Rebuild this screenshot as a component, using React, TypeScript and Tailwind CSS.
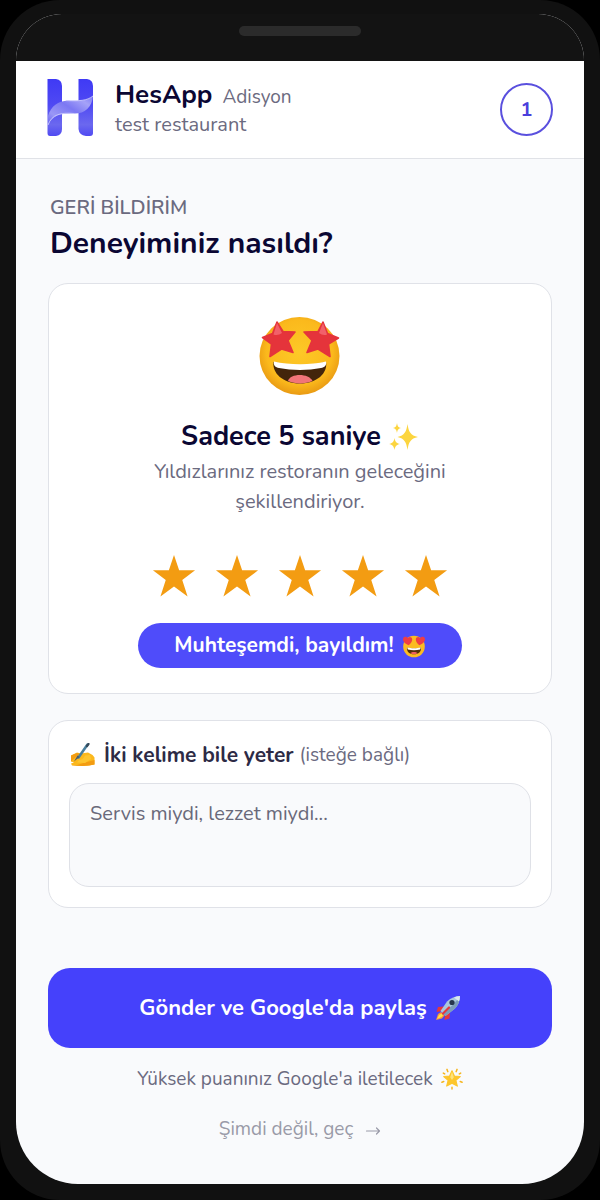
import { useState } from "react";

const STAR = "M12 0.6 14.8 8.900H23.500L16.500 14.200 19.400 23.200 12 17.700 4.600 23.200 7.500 14.200 .5 8.900H9.200Z";

function Logo() {
  return (
    <svg viewBox="0 0 47 57" className="mb-1 h-[57px] w-[47px] shrink-0" role="img" aria-label="HesApp">
      <defs>
        <linearGradient id="pillar" x1="0" y1="0" x2="0" y2="1">
          <stop offset="0" stopColor="#3f3af5" />
          <stop offset="0.45" stopColor="#4f49f3" />
          <stop offset="0.8" stopColor="#6b68ef" />
          <stop offset="1" stopColor="#504af2" />
        </linearGradient>
        <linearGradient id="ribbon" x1="0" y1="1" x2="1" y2="0">
          <stop offset="0" stopColor="#5f5af0" />
          <stop offset="0.25" stopColor="#9a97f6" />
          <stop offset="0.55" stopColor="#7c78f3" />
          <stop offset="0.8" stopColor="#a5a2f8" />
          <stop offset="1" stopColor="#7b77f5" />
        </linearGradient>
      </defs>
      <path d="M0.500 0H9Q15 1 15 7V50Q15 56 9 57H3Q0.500 57 0.500 54Z" fill="url(#pillar)" />
      <path d="M31.500 0H40Q46 1 46 7V54Q46 57 43 57H39Q32 56 31.500 50Z" fill="url(#pillar)" />
      <path d="M1 47V37C4 27 11 22 21 21.500C32 22 41 22 46 17C45 29 37 35 27 34.500C14 34 5 36 1 47Z" fill="url(#ribbon)" />
      <path d="M1 46C5 35 14 33.500 27 34.500M19 21.600C32 22 40 22 46 17" fill="none" stroke="#cbc9fc" strokeWidth="0.9" />
    </svg>
  );
}

function StarStruck() {
  return (
    <svg viewBox="0 0 84 80" className="h-[80px] w-[84px]" aria-hidden="true">
      <defs>
        <radialGradient id="face" cx="0.5" cy="0.45" r="0.55">
          <stop offset="0" stopColor="#fdc927" />
          <stop offset="0.75" stopColor="#fbb91c" />
          <stop offset="1" stopColor="#e99a13" />
        </radialGradient>
      </defs>
      <ellipse cx="41.500" cy="40" rx="40" ry="39" fill="url(#face)" />
      <g fill="#e5343b" stroke="#e5343b" strokeWidth="1.600" strokeLinejoin="round">
        <path d="M19 6 25 15.500 37 16 30 24.500 35 36.500 23.500 33 12 40.500 13.500 28 4.500 21.500 14.500 17.500Z" />
        <path d="M65 6 60 15.500 46 16 54 24.500 49 36.500 60 33 72 40.500 70.500 28 80.500 22 69.500 17.500Z" />
      </g>
      <path d="M19 7 24 17Q20 20 15.500 18.500ZM65 7 61 17Q65 20 69 18.500Z" fill="#f2606a" />
      <path d="M15.500 46C30 50 53 50 68 46C70 57 59 67.500 42 67.500S14 57 15.500 46Z" fill="#43250b" />
      <path d="M16 45.500C31 49 53 49 68 45.500C69 49 66.500 51.500 63 52C50 54.500 34 54.500 21 52C17.500 51.500 15 49 16 45.500Z" fill="#fff" />
      <path d="M30 65C32 57 51 57 54.500 65C47 68.300 37 68.300 30 65Z" fill="#f17578" />
    </svg>
  );
}

function Sparkles() {
  return (
    <svg viewBox="0 0 30 30" className="size-[30px]" fill="#fcd53f" aria-hidden="true">
      <path d="M18.500 2C19.700 10 21.500 13.300 29 15C21.500 16.700 19.700 20 18.500 28C17.300 20 15.500 16.700 8.500 15C15.500 13.300 17.300 10 18.500 2Z" />
      <path d="M8 1C8.600 4.500 9.500 5.500 12 6C9.500 6.500 8.600 7.500 8 11C7.400 7.500 6.500 6.500 4 6C6.500 5.500 7.400 4.500 8 1ZM5.500 16C6.300 20 7.500 21.300 11 22C7.500 22.700 6.300 24 5.500 28C4.700 24 3.500 22.700 0 22C3.500 21.300 4.700 20 5.500 16Z" />
    </svg>
  );
}

function HeartEyes() {
  return (
    <svg viewBox="0 0 24 24" className="size-[24px]" aria-hidden="true">
      <circle cx="12" cy="12.500" r="10.800" fill="#fbbb22" />
      <path d="M6.600 11.300C2.500 9.500.3 6.500 1.200 4.200C2 2.300 4.600 2.300 5.800 4C7.400 2.300 10 3 10.200 5.200C10.300 7.400 8.700 9.700 6.600 11.300Z" fill="#ef3d45" />
      <path d="M17.400 11.300C21.500 9.500 23.700 6.500 22.800 4.200C22 2.300 19.400 2.300 18.200 4C16.600 2.300 14 3 13.800 5.200C13.700 7.400 15.300 9.700 17.400 11.300Z" fill="#ef3d45" />
      <path d="M5 13.500C9 14.700 15 14.700 19 13.500C19.500 17.500 16.500 20.300 12 20.300S4.500 17.500 5 13.500Z" fill="#553008" />
      <path d="M5.200 13.500C9 14.600 15 14.600 18.800 13.500L18.200 15.600C14 16.400 10 16.400 5.800 15.600Z" fill="#fff" />
      <path d="M8.500 19.300C9.500 17.600 14.500 17.600 15.500 19.300C13.500 20.500 10.500 20.500 8.500 19.300Z" fill="#f0605c" />
    </svg>
  );
}

function WritingHand() {
  return (
    <svg viewBox="0 0 26 24" className="h-[24px] w-[26px]" aria-hidden="true">
      <path d="M1 12.500 7 9.500 11 10.500 18 9.500Q22 11 24.500 14.500V21.500L19 22.500 13 23 2 22.500 1 20.500 4 19.500 1 18.500Z" fill="#fbb81d" />
      <path d="M1 12.500 7 10 10 11 6 14 3 16.500 1 18.500ZM15 19.500 24.500 17V21.500L19 22.500 13 23 2 22.500Q9 22 15 19.500Z" fill="#f39c12" />
      <path d="M17.500 1.500 8.500 14.500" stroke="#4a7f9d" strokeWidth="2.600" strokeLinecap="round" />
      <path d="M18.500 1 17 3" stroke="#34495a" strokeWidth="2.200" strokeLinecap="round" />
      <path d="M9.500 14 4 18.500 7.500 12.500Z" fill="#4b5966" />
      <path d="M9 17Q13 17 15 12.500L20 12 21 16 15 20 7 19.500Z" fill="#fdc530" />
    </svg>
  );
}

function Rocket() {
  return (
    <svg viewBox="0 0 26 26" className="size-[26px]" aria-hidden="true">
      <path d="M9 11.500 3 12 1.500 17 7 16ZM15 18 14.500 23.500 9.500 25 10 19.500Z" fill="#e5383b" />
      <path d="M6 17 3 19 1 25 7 23.500 9.500 20.500Z" fill="#fb923c" />
      <path d="M6.500 18.500 4 20 2 24 6.500 22 8 20.200Z" fill="#fde047" />
      <path d="M25 1Q25 8 20 13.500L10.500 21 5.500 16 12 6.500Q18 1 25 1Z" fill="#a9c7dc" />
      <path d="M25 1Q25 8 20 13.500L10.500 21 8 18.500Q19 10 25 1Z" fill="#7c9dba" />
      <path d="M19 2.500Q22 1 25 1 25 4 24 6.500Z" fill="#dbe8f1" />
      <circle cx="17" cy="7.500" r="2.600" fill="#26364d" />
      <path d="M14 12.500 8 18.500" stroke="#e5383b" strokeWidth="2.200" strokeLinecap="round" />
    </svg>
  );
}

function GlowingStar() {
  return (
    <svg viewBox="0 0 24 24" className="size-[22px]" aria-hidden="true">
      <path d="M6.500 1.500 7.500 4M17.500 1.500 16.500 4M1 15.500 3 14.800M23 15.500 21 14.800M12 21V23M2.500 5.500 4 6.500M21.500 5.500 20 6.500" stroke="#f5b51e" strokeWidth="1.600" strokeLinecap="round" />
      <path d="M12 3 14.600 8.700 21 9.300 16.200 13.400 17.800 19.700 12 16.500 6.200 19.700 7.800 13.400 3 9.300 9.400 8.700Z" fill="#fdc62c" stroke="#fdc62c" strokeWidth="1.300" strokeLinejoin="round" />
      <path d="M12 4 14 10 12 13 10 10Z" fill="#fee37a" />
    </svg>
  );
}

export default function App() {
  const [rating, setRating] = useState(5);
  return (
    <div className="flex min-h-screen bg-black font-[Nunito,Lato,'Noto_Sans',sans-serif] text-xl text-[#6b6a80]">
      <div className="flex w-full flex-col rounded-[60px] bg-[#111111] px-4 pt-3.5 pb-4">
        <div className="flex grow flex-col overflow-hidden rounded-t-[46px] rounded-b-[62px] bg-[#f9fafc]">
          <div className="flex h-[47px] justify-center bg-[#131313] pt-3">
            <div className="h-2.5 w-[122px] rounded-full bg-[#2b2b2b]" />
          </div>

          <header className="flex h-[98px] items-center border-b border-[#e0e2e7] bg-white px-[31px]">
            <Logo />
            <div className="ml-[21px] grow">
              <div className="flex items-baseline gap-2.5 leading-7">
                <h1 className="text-[26px] font-bold text-[#0b0733]">HesApp</h1>
                <span className="text-[19px]">Adisyon</span>
              </div>
              <p className="leading-7">test restaurant</p>
            </div>
            <div className="flex size-[53px] items-center justify-center rounded-full border-2 border-[#5a50de] font-bold text-[#4a3fdc]">
              1
            </div>
          </header>

          <main className="flex grow flex-col px-8 pt-[35px]">
            <p className="px-0.5 leading-7 font-semibold">GERİ BİLDİRİM</p>
            <h2 className="px-0.5 text-[30px] leading-[44px] font-bold text-[#0b0733]">Deneyiminiz nasıldı?</h2>

            <section className="mt-[17px] flex flex-col items-center rounded-[20px] border border-[#e0e2e8] bg-white px-5 pt-8 pb-[25px]">
              <StarStruck />
              <h3 className="mt-[21px] flex items-center gap-2 text-[27px] leading-10 font-bold text-[#0b0733]">
                Sadece 5 saniye <Sparkles />
              </h3>
              <p className="max-w-[320px] text-center leading-[30px]">
                Yıldızlarınız restoranın geleceğini şekillendiriyor.
              </p>
              <div className="mt-[37px] flex gap-[19px]">
                {[1, 2, 3, 4, 5].map((n) => (
                  <button key={n} type="button" aria-label={`${n} yıldız`} aria-pressed={n <= rating} onClick={() => setRating(n)}>
                    <svg viewBox="0 0 24 24" className={n <= rating ? "size-11 text-[#f39c12]" : "size-11 text-[#e2e4ea]"} aria-hidden="true">
                      <path d={STAR} fill="currentColor" />
                    </svg>
                  </button>
                ))}
              </div>
              <p className="mt-[25px] flex h-[45px] w-[324px] max-w-full items-center justify-center gap-2 rounded-full bg-[#4f4cfa] text-[21px] font-bold text-white">
                Muhteşemdi, bayıldım! <HeartEyes />
              </p>
            </section>

            <section className="mt-[26px] rounded-[20px] border border-[#e0e2e8] bg-white px-5 py-5">
              <label htmlFor="comment" className="flex items-center px-px leading-7">
                <WritingHand />
                <span className="mr-1.5 ml-2 text-[21px] font-bold text-[#2d2a45]">İki kelime bile yeter</span>
                <span className="text-[19px]">(isteğe bağlı)</span>
              </label>
              <textarea
                id="comment"
                placeholder="Servis miydi, lezzet miydi..."
                className="mt-3.5 block h-[104px] w-full resize-none rounded-[20px] border border-[#dfe1e7] bg-[#f9fafc] px-5 py-4 leading-7 text-[#2d2a45] placeholder:text-[#69697a]"
              />
            </section>

            <button type="button" className="mt-[60px] flex h-20 items-center justify-center gap-2 rounded-[22px] bg-[#4541fb] text-[22px] font-bold text-white">
              Gönder ve Google'da paylaş <Rocket />
            </button>
            <p className="mt-4 flex items-center justify-center gap-2 text-[19px] leading-[30px]">
              Yüksek puanınız Google'a iletilecek <GlowingStar />
            </p>
            <a href="#" className="mt-5 mb-8 flex items-center justify-center gap-3 text-[19px] leading-[30px] text-[#9a9aa8]">
              Şimdi değil, geç
              <svg viewBox="0 0 16 12" className="mt-1 h-3 w-4" fill="none" stroke="currentColor" strokeWidth="1.200" strokeLinecap="round" strokeLinejoin="round" aria-hidden="true">
                <path d="M1.500 6H14.500M11.500 3 14.500 6 11.500 9" />
              </svg>
            </a>
          </main>
        </div>
      </div>
    </div>
  );
}
